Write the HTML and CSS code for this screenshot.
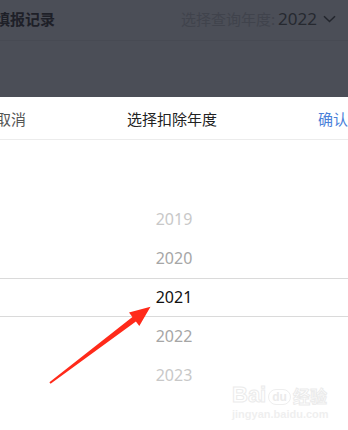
FILE: index.html
```html
<!DOCTYPE html>
<html lang="zh">
<head>
<meta charset="utf-8">
<link rel="stylesheet" href="styles.css">
</head>
<body>
<div class="screen">
  <div class="overlay">
    <div class="topbar">
      <span class="title">填报记录</span>
      <span class="query"><span class="qlabel">选择查询年度:</span><span class="qyear">2022</span><svg class="chev" width="13" height="8" viewBox="0 0 13 8"><path d="M1 1.2 L6.5 6.5 L12 1.2" fill="none" stroke="#23262d" stroke-width="1.5"/></svg></span>
    </div>
  </div>
  <div class="sheet">
    <div class="sheet-head">
      <span class="cancel">取消</span>
      <span class="sheet-title">选择扣除年度</span>
      <span class="confirm">确认</span>
    </div>
    <div class="picker">
      <div class="row r-far">2019</div>
      <div class="row r-near">2020</div>
      <div class="row r-sel">2021</div>
      <div class="row r-near">2022</div>
      <div class="row r-far">2023</div>
    </div>
  </div>
  <svg class="arrow" width="348" height="430" viewBox="0 0 348 430">
    <polygon points="49.4,382.3 132.4,317.0 129.0,312.4 150.5,306.7 139.3,325.9 135.9,321.4 50.6,383.7" fill="#ff2a1a"/>
  </svg>
  <div class="watermark">
    <div class="wm-top"><span class="wm-bai">Bai</span><span class="wm-du">du</span><span class="wm-jy">经验</span></div>
    <div class="wm-url">jingyan.baidu.com</div>
  </div>
</div>
</body>
</html>
```
FILE: styles.css
```css
html, body {
  margin: 0;
  padding: 0;
  background: #fff;
}
.screen {
  position: relative;
  width: 348px;
  height: 430px;
  overflow: hidden;
  font-family: "Noto Sans CJK SC", "Noto Sans", sans-serif;
}
.overlay {
  height: 97px;
  background: #4b4e57;
}
.topbar {
  height: 41px;
  border-bottom: 1px solid #474a53;
  display: flex;
  align-items: center;
  justify-content: space-between;
  padding-right: 12px;
  box-sizing: border-box;
}
.title {
  margin-left: -5px;
  font-size: 15px;
  font-weight: 700;
  color: #1e2028;
  margin-top: -4px;
}
.query {
  display: flex;
  align-items: center;
  margin-top: -4px;
}
.qlabel {
  font-size: 15px;
  color: #40434c;
}
.qyear {
  font-family: "Noto Sans", sans-serif;
  font-size: 17px;
  color: #262930;
  margin-left: 3px;
}
.chev {
  margin-left: 6px;
  margin-top: 2px;
}
.sheet {
  background: #fff;
}
.sheet-head {
  height: 42px;
  border-bottom: 1px solid #ececec;
  display: flex;
  align-items: center;
  justify-content: space-between;
  font-size: 15px;
}
.cancel {
  margin-left: -4px;
  color: #555;
  width: 40px;
}
.sheet-title {
  color: #222;
}
.confirm {
  color: #4a80d9;
  width: 40px;
  text-align: right;
}
.picker {
  padding-top: 60px;
  display: flex;
  flex-direction: column;
}
.row {
  height: 39px;
  display: flex;
  align-items: center;
  justify-content: center;
  font-family: "Noto Sans", sans-serif;
  font-size: 16px;
  line-height: 1;
  padding-bottom: 2px;
  box-sizing: border-box;
}
.r-far { color: #c8c8c8; }
.r-near { color: #a6a6a6; }
.r-sel {
  color: #111;
  border-top: 1px solid #dadada;
  border-bottom: 1px solid #dadada;
}
.arrow {
  position: absolute;
  left: 0;
  top: 0;
}
.watermark {
  position: absolute;
  left: 232px;
  top: 382px;
  width: 96px;
  font-family: "Liberation Sans", sans-serif;
}
.wm-top {
  display: flex;
  align-items: flex-end;
  gap: 2px;
}
.wm-bai {
  font-size: 22px;
  font-weight: 700;
  -webkit-text-stroke: 1px #ebebeb;
  -webkit-text-fill-color: #fff;
}
.wm-du {
  font-size: 12px;
  font-weight: 700;
  border: 1px solid #eeeeee;
  border-radius: 8px;
  padding: 0 3px;
  color: #ebebeb;
  margin-bottom: 3px;
}
.wm-jy {
  font-family: "Noto Sans CJK SC", sans-serif;
  font-size: 17px;
  font-weight: 700;
  -webkit-text-stroke: 1px #ebebeb;
  -webkit-text-fill-color: #fff;
}
.wm-url {
  font-size: 11px;
  color: #efefef;
  font-weight: 700;
}
```
